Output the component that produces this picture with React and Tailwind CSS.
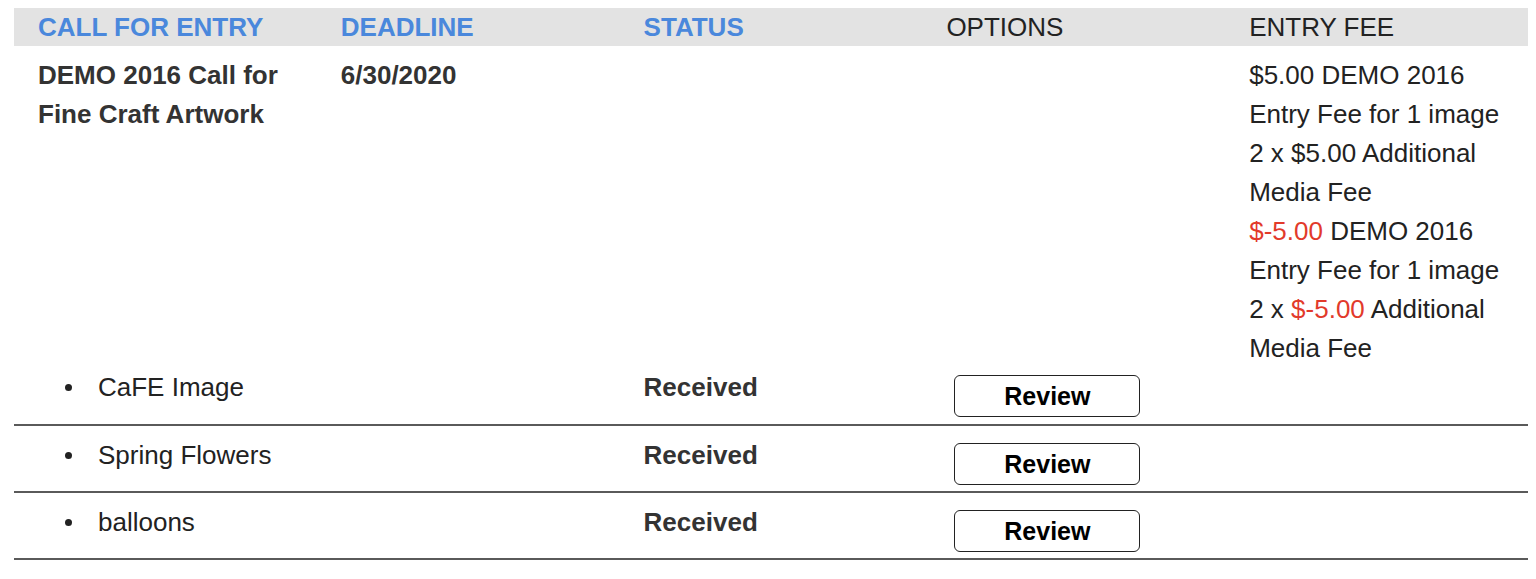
const entry = {
  name: "DEMO 2016 Call for Fine Craft Artwork",
  deadline: "6/30/2020",
  media: ["CaFE Image", "Spring Flowers", "balloons"],
};

function Fee({ children }) {
  return <div>{children}</div>;
}

function App() {
  return (
    <div className="bg-white pt-2 pr-[8px] pl-[14px] text-[26px] leading-[39px] text-[#222]" style={{ fontFamily: '"Liberation Sans", Arial, sans-serif' }}>
      <div className="grid grid-cols-5 bg-[#e3e3e3] h-[38px] items-center">
        <div className="pl-6 font-bold text-[#4a88dc]">CALL FOR ENTRY</div>
        <div className="pl-6 font-bold text-[#4a88dc]">DEADLINE</div>
        <div className="pl-6 font-bold text-[#4a88dc]">STATUS</div>
        <div className="pl-6">OPTIONS</div>
        <div className="pl-6">ENTRY FEE</div>
      </div>

      <div className="grid grid-cols-5 pt-[10px]">
        <div className="pl-6 pr-4 font-bold text-[#333]">{entry.name}</div>
        <div className="pl-6 font-bold text-[#333]">{entry.deadline}</div>
        <div />
        <div />
        <div className="pl-6 pr-2">
          <Fee>$5.00 DEMO 2016 Entry Fee for 1 image</Fee>
          <Fee>2 x $5.00 Additional Media Fee</Fee>
          <Fee>
            <span className="text-[#e23a2b]">$-5.00</span> DEMO 2016 Entry Fee for 1 image
          </Fee>
          <Fee>
            2 x <span className="text-[#e23a2b]">$-5.00</span> Additional Media Fee
          </Fee>
        </div>
      </div>

      {entry.media.map((m, i) => (
        <div
          key={m}
          className={`grid grid-cols-5 border-b-2 border-[#5a5a5a] ${i === 0 ? "pt-0 pb-[7px]" : "pt-[10px] pb-[6px]"}`}
        >
          <div className="col-span-2 pl-6 flex items-start">
            <span className="w-[60px] flex items-center h-[39px] pl-[27px]">
              <span className="w-[7px] h-[7px] rounded-full bg-[#222]" />
            </span>
            <span>{m}</span>
          </div>
          <div className="pl-6 font-bold text-[#333]">Received</div>
          <div className="pl-6">
            <button
              type="button"
              className="mt-[7px] ml-2 w-[186px] h-[42px] rounded-md border-[1.5px] border-[#222] bg-white font-bold text-black text-[25px] leading-none"
            >
              Review
            </button>
          </div>
          <div />
        </div>
      ))}
    </div>
  );
}

export default App;
